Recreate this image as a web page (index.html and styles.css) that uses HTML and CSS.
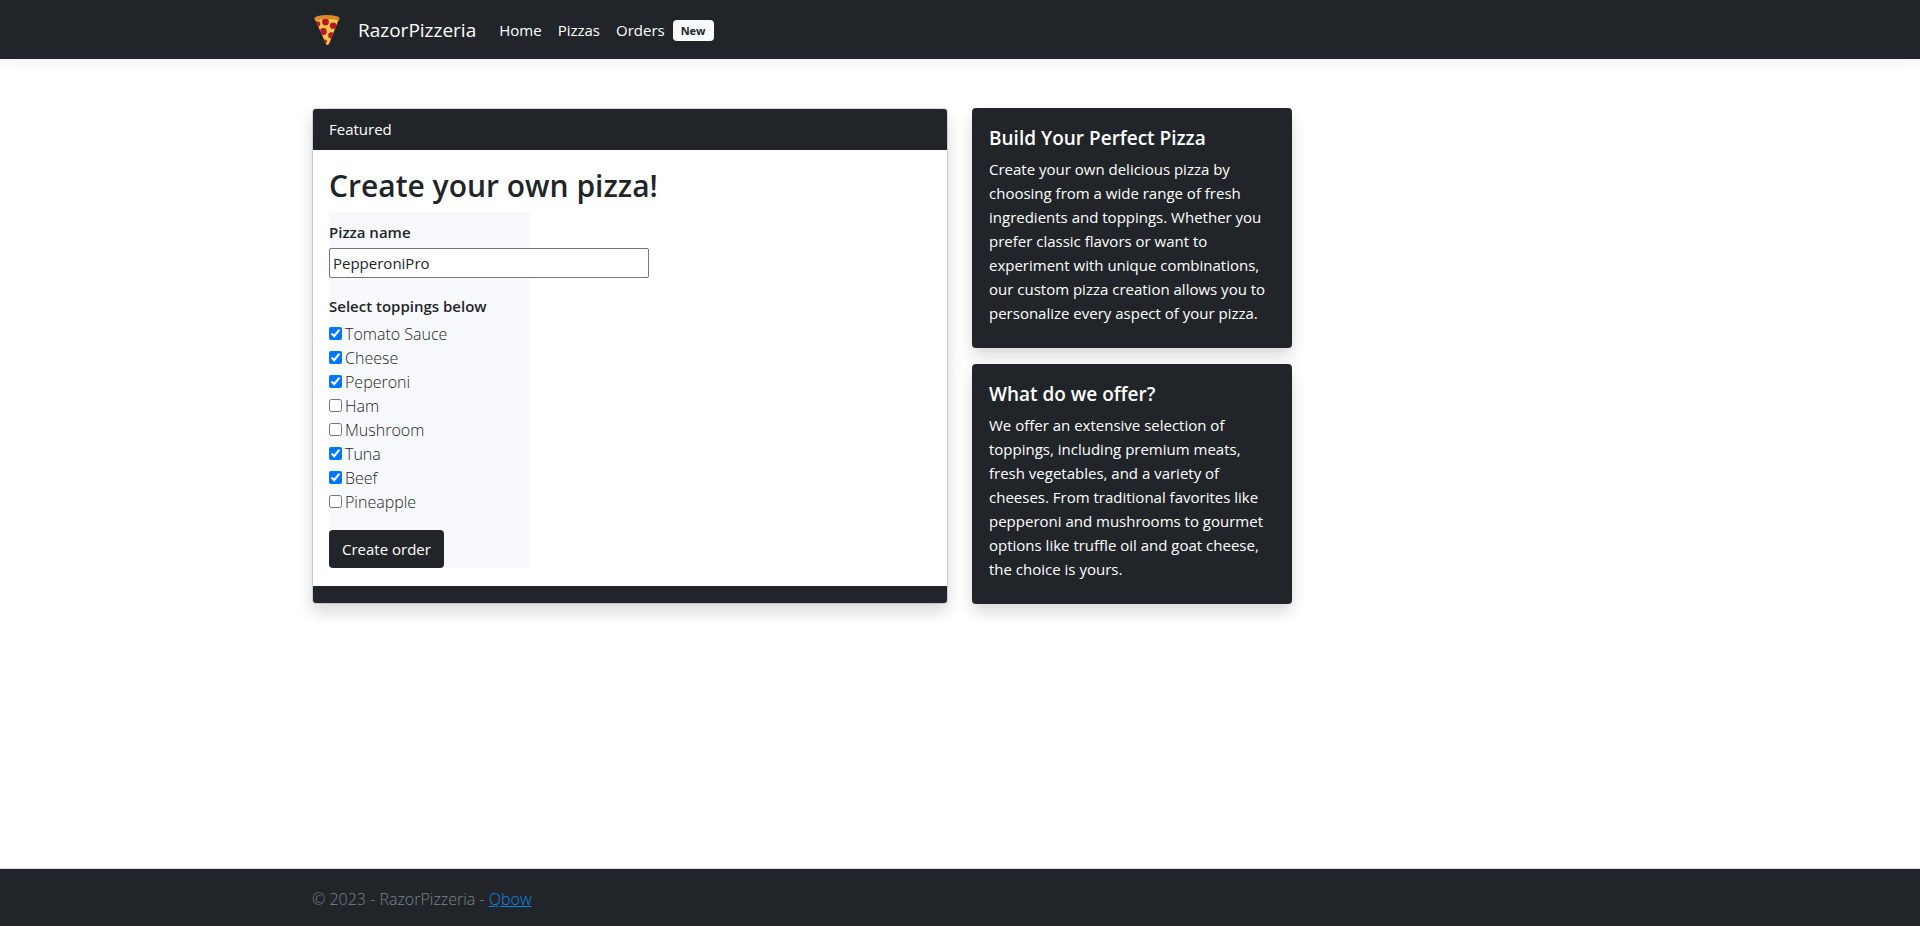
FILE: index.html
```html
<!DOCTYPE html>
<html lang="en">
<head>
  <meta charset="utf-8">
  <meta name="viewport" content="width=device-width, initial-scale=1">
  <title>RazorPizzeria</title>
  <link rel="stylesheet" href="styles.css">
</head>
<body>
  <header class="navbar">
    <nav class="container navbar-inner">
      <a class="brand" href="#">
        <svg class="brand-logo" viewBox="0 0 26 30" aria-hidden="true">
          <defs><clipPath id="slice"><path d="M1.500 5 Q13 1.500 24.500 5 L15 29 Q13 31 12 29Z"/></clipPath></defs>
          <path fill="#ffc64b" d="M1.500 5 Q13 1.500 24.500 5 L15 29 Q13 31 12 29Z"/>
          <g fill="#b91724" clip-path="url(#slice)">
            <circle cx="11.500" cy="7" r="3.400"/>
            <circle cx="19.200" cy="10.700" r="3.300"/>
            <circle cx="3.500" cy="9" r="2.800"/>
            <circle cx="9.300" cy="16.500" r="3.400"/>
            <circle cx="17.500" cy="20.500" r="3.300"/>
            <circle cx="11" cy="26.500" r="2"/>
          </g>
          <path fill="#d9882b" d="M.5 4.500 C.2 3 1 2 3 1.300 Q13 -1.300 23 1.300 C25 2 26 3 25.500 4.500 C25 6 23.500 5.500 22.500 5 Q13 2.300 3.500 5 C2.500 5.500 1 6 .5 4.500Z"/>
        </svg>
        <span>RazorPizzeria</span>
      </a>
      <ul class="nav-list">
        <li><a class="nav-link" href="#">Home</a></li>
        <li><a class="nav-link" href="#">Pizzas</a></li>
        <li><a class="nav-link" href="#">Orders <span class="badge">New</span></a></li>
      </ul>
    </nav>
  </header>

  <main class="container main">
    <section class="card order-card">
      <div class="card-header">Featured</div>
      <div class="card-body">
        <h1 class="card-heading">Create your own pizza!</h1>
        <form class="order-form">
          <label class="form-title" for="pizza-name">Pizza name</label>
          <input class="text-field" id="pizza-name" type="text" value="PepperoniPro">
          <fieldset class="toppings">
            <legend class="form-title">Select toppings below</legend>
            <label class="topping"><input type="checkbox" checked>Tomato Sauce</label>
            <label class="topping"><input type="checkbox" checked>Cheese</label>
            <label class="topping"><input type="checkbox" checked>Peperoni</label>
            <label class="topping"><input type="checkbox">Ham</label>
            <label class="topping"><input type="checkbox">Mushroom</label>
            <label class="topping"><input type="checkbox" checked>Tuna</label>
            <label class="topping"><input type="checkbox" checked>Beef</label>
            <label class="topping"><input type="checkbox">Pineapple</label>
          </fieldset>
          <button class="submit" type="button">Create order</button>
        </form>
      </div>
      <div class="card-footer"></div>
    </section>

    <aside class="info">
      <section class="info-card">
        <h2 class="info-title">Build Your Perfect Pizza</h2>
        <p class="info-text">Create your own delicious pizza by choosing from a wide range of fresh ingredients and toppings. Whether you prefer classic flavors or want to experiment with unique combinations, our custom pizza creation allows you to personalize every aspect of your pizza.</p>
      </section>
      <section class="info-card">
        <h2 class="info-title">What do we offer?</h2>
        <p class="info-text">We offer an extensive selection of toppings, including premium meats, fresh vegetables, and a variety of cheeses. From traditional favorites like pepperoni and mushrooms to gourmet options like truffle oil and goat cheese, the choice is yours.</p>
      </section>
    </aside>
  </main>

  <footer class="footer">
    <div class="container">© 2023 - RazorPizzeria - <a class="footer-link" href="#">Qbow</a></div>
  </footer>
</body>
</html>
```
FILE: styles.css
```css
* {
  box-sizing: border-box;
}

body {
  display: flex;
  flex-direction: column;
  min-height: 100vh;
  margin: 0;
  background: #fff;
  color: #212529;
  font-family: "Open Sans", "Noto Sans", sans-serif;
  font-size: 15px;
  line-height: 24px;
}

.container {
  width: 100%;
  max-width: 1320px;
  margin: 0 auto;
  padding: 0 12px;
}

.navbar {
  background: #212529;
  box-shadow: 0 4px 12px rgba(0, 0, 0, 0.06);
}

.navbar-inner {
  display: flex;
  align-items: center;
  gap: 15px;
  padding-top: 8px;
  padding-bottom: 8px;
  min-height: 59px;
}

.brand {
  display: flex;
  align-items: center;
  gap: 18px;
  padding-left: 2px;
  color: #fff;
  font-size: 19px;
  text-decoration: none;
}

.brand-logo {
  width: 26px;
  height: 30px;
}

.nav-list {
  display: flex;
  margin: 0;
  padding: 0;
  list-style: none;
}

.nav-link {
  display: flex;
  align-items: center;
  gap: 8px;
  padding: 0 8px;
  color: #fff;
  text-decoration: none;
}

.badge {
  margin-top: 2px;
  padding: 4px 8px;
  border-radius: 4px;
  background: #f8f9fa;
  color: #212529;
  font-size: 11px;
  font-weight: 700;
  line-height: 13px;
}

.main {
  display: flex;
  align-items: flex-start;
  gap: 24px;
  flex: 1;
  padding-top: 49px;
  padding-bottom: 49px;
}

.order-card,
.info-card {
  border-radius: 4px;
  box-shadow: 0 8px 16px rgba(0, 0, 0, 0.15);
}

.order-card {
  flex: 0 1 636px;
  border: 1px solid rgba(0, 0, 0, 0.125);
  background: #fff;
  background-clip: padding-box;
}

.card-header {
  padding: 8px 16px 9px;
  border-radius: 3px 3px 0 0;
  background: #212529;
  color: #fff;
}

.card-body {
  padding: 17px 16px 18px;
}

.card-heading {
  margin: 0 0 7px;
  font-size: 30px;
  font-weight: 600;
  line-height: 38px;
}

.order-form {
  width: 33.333%;
  padding-top: 8px;
  background: #f8f9fc;
}

.form-title {
  display: block;
  margin: 0 0 4px;
  padding: 0;
  font-weight: 600;
  white-space: nowrap;
}

.text-field {
  display: block;
  width: 320px;
  height: 30px;
  padding: 1px 3px;
  border: 1px solid #767676;
  border-radius: 2px;
  background: #fff;
  color: #212529;
  font: inherit;
}

.toppings {
  margin: 16px 0;
  padding: 0;
  border: 0;
}

.topping {
  display: flex;
  align-items: center;
  gap: 3px;
  font-size: 16px;
  font-weight: 300;
}

.topping input {
  width: 13px;
  height: 13px;
  margin: 0 0 2px;
}

.submit {
  display: block;
  padding: 7px 13px;
  border: 0;
  border-radius: 4px;
  background: #212529;
  color: #fff;
  font: inherit;
  white-space: nowrap;
}

.card-footer {
  height: 17px;
  border-radius: 0 0 3px 3px;
  background: #212529;
}

.info {
  display: flex;
  flex-direction: column;
  flex: 0 1 320px;
  gap: 16px;
}

.info-card {
  padding: 18px 16px 23px 17px;
  background: #212529;
  color: #fff;
}

.info-title {
  margin: 0 0 7px;
  font-size: 19px;
  font-weight: 600;
  line-height: 24px;
}

.info-text {
  margin: 0;
}

.footer {
  padding: 18px 0 15px;
  border-top: 1px solid #dee2e6;
  background: #212529;
  color: #7b848c;
  font-size: 16px;
  font-weight: 300;
}

.footer-link {
  color: #1485e0;
}
```
